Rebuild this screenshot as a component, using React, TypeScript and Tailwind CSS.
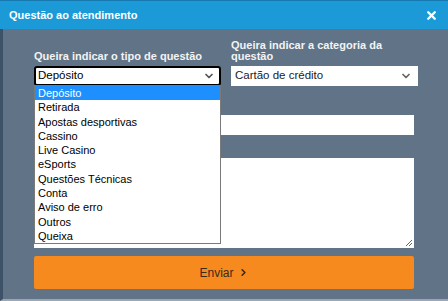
import { ChevronDown, ChevronRight, X } from "lucide-react";

const tipos = [
  "Depósito",
  "Retirada",
  "Apostas desportivas",
  "Cassino",
  "Live Casino",
  "eSports",
  "Questões Técnicas",
  "Conta",
  "Aviso de erro",
  "Outros",
  "Queixa",
];

export default function App() {
  return (
    <div className="w-[448px] h-[301px] overflow-hidden bg-[#607387] font-['Liberation_Sans',Arial,sans-serif] text-[11px] flex flex-col">
      <div className="h-[29px] shrink-0 bg-[#1b9ad7] border-t border-[#1679b0] flex items-center justify-between pl-[9px] pr-[10px]">
        <span className="text-white font-bold text-[11px]">Questão ao atendimento</span>
        <X className="w-[13px] h-[13px] text-white" strokeWidth={4.5} />
      </div>

      <div className="flex-1 border-l-[3px] border-b-[2px] border-l-[#3e5267] border-b-[#9aa6b2] pl-[31px] pt-[11px]">
        <div className="relative">
          <div className="flex gap-[10px] items-end">
            <div className="w-[187px]">
              <div className="text-[#f3f3f3] font-bold leading-[11px] mb-[4px]">Queira indicar o tipo de questão</div>
              <div className="h-[20px] bg-white border-2 border-black rounded-[3px] flex items-center justify-between pl-[2px] pr-[4px] text-black text-[11.5px]">
                <span>Depósito</span>
                <ChevronDown className="w-[12px] h-[12px] text-[#555]" strokeWidth={3.5} />
              </div>
            </div>
            <div className="w-[187px]">
              <div className="text-[#f3f3f3] font-bold leading-[11px] mb-[4px]">
                Queira indicar a categoria da
                <br />
                questão
              </div>
              <div className="h-[20px] bg-white flex items-center justify-between pl-[4px] pr-[6px] text-[#222] text-[11.5px]">
                <span>Cartão de crédito</span>
                <ChevronDown className="w-[12px] h-[12px] text-[#666]" strokeWidth={3.5} />
              </div>
            </div>
          </div>

          <div className="w-[380px] mt-[29px] h-[20px] bg-white" />
          <div className="w-[380px] mt-[23px] h-[90px] bg-white relative">
            <svg className="absolute right-[1px] bottom-[1px]" width="9" height="9" viewBox="0 0 9 9">
              <path d="M8 2 L2 8 M8 5 L5 8" stroke="#666" strokeWidth="1" />
            </svg>
          </div>

          <button className="w-[380px] mt-[8px] h-[33px] bg-[#f68a1f] rounded-[2px] flex items-center justify-center gap-[4px] text-[#3a2a1a] text-[12px]">
            Enviar
            <ChevronRight className="w-[11px] h-[11px]" strokeWidth={3.5} />
          </button>

          <div className="absolute left-0 top-[45px] w-[187px] bg-white border border-[#7a7a7a]">
            {tipos.map((t, i) => (
              <div
                key={t}
                className={
                  "h-[14.3px] leading-[14.3px] pl-[3px] " +
                  (i === 0 ? "bg-[#1e8fff] text-white" : "text-black")
                }
              >
                {t}
              </div>
            ))}
          </div>
        </div>
      </div>
    </div>
  );
}
